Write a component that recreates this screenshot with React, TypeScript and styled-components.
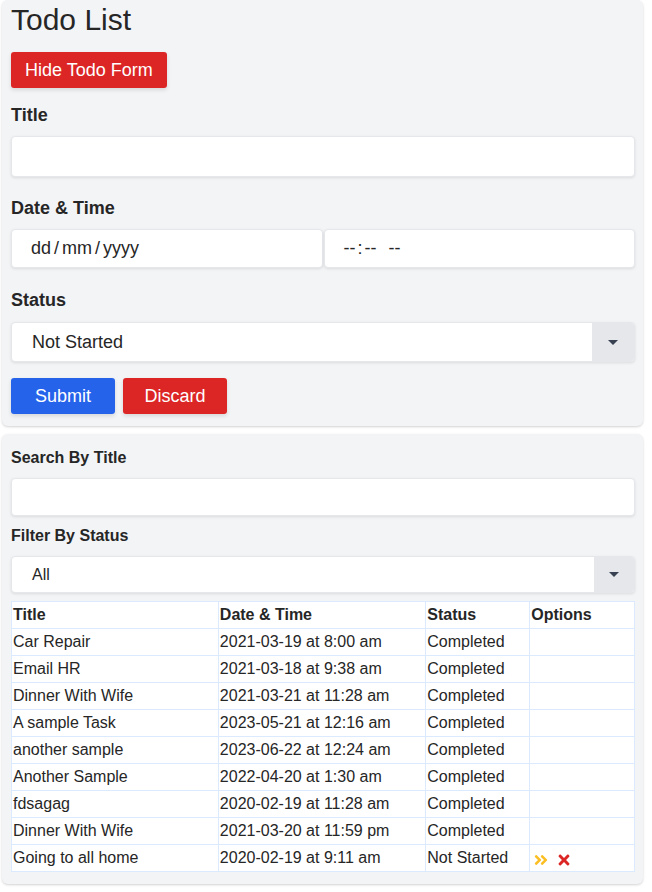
import React from "react";
import styled, { createGlobalStyle } from "styled-components";
import { FaAngleDoubleRight, FaTimes } from "react-icons/fa";

const Global = createGlobalStyle`
  html, body { margin: 0; padding: 0; background: #ffffff; }
  body { font-family: "Liberation Sans", Arial, sans-serif; color: #262626; }
  * { box-sizing: border-box; }
`;

const Page = styled.div`
  display: flex;
  flex-direction: column;
  gap: 8px;
  padding: 0 9px 8px 2px;
`;

const Card = styled.section<{ $pt: number }>`
  background: #f3f4f6;
  border-radius: 6px;
  box-shadow: 0 1px 3px rgba(0, 0, 0, 0.12), 0 1px 2px rgba(0, 0, 0, 0.06);
  padding: ${(p) => p.$pt}px 8px 12px 9px;
  display: flex;
  flex-direction: column;
`;

const Heading = styled.h1`
  margin: 0;
  font-size: 30px;
  line-height: 36px;
  font-weight: 400;
  color: #262626;
`;

const Btn = styled.button<{ $color: string; $w?: number }>`
  height: 36px;
  border: none;
  border-radius: 3px;
  background: ${(p) => p.$color};
  color: #ffffff;
  font-family: "Liberation Sans", Arial, sans-serif;
  font-size: 18px;
  padding: 0 14px;
  width: ${(p) => (p.$w ? `${p.$w}px` : "auto")};
  box-shadow: 0 2px 4px rgba(0, 0, 0, 0.12);
  cursor: pointer;
`;

const TopBtn = styled(Btn)`
  align-self: flex-start;
  margin-top: 14px;
`;

const Label = styled.label<{ $mt: number; $small?: boolean }>`
  display: block;
  margin-top: ${(p) => p.$mt}px;
  font-weight: 700;
  font-size: ${(p) => (p.$small ? 16 : 18)}px;
  line-height: ${(p) => (p.$small ? 24 : 28)}px;
  color: #262626;
`;

const Field = styled.div<{ $h: number; $mt: number }>`
  margin-top: ${(p) => p.$mt}px;
  height: ${(p) => p.$h}px;
  background: #ffffff;
  border: 1px solid #e5e7eb;
  border-radius: 4px;
  box-shadow: 0 1px 3px rgba(0, 0, 0, 0.1);
`;

const DateRow = styled.div`
  margin-top: 7px;
  display: grid;
  grid-template-columns: 1fr 1fr;
  gap: 1px;
`;

const DateBox = styled.div`
  height: 39px;
  background: #ffffff;
  border: 1px solid #e5e7eb;
  border-radius: 4px;
  box-shadow: 0 1px 3px rgba(0, 0, 0, 0.1);
  display: flex;
  align-items: center;
  padding-left: 19px;
  font-size: 18px;
  color: #262626;
  white-space: pre;
`;

const Sep = styled.span<{ $m: number }>`
  margin: 0 ${(p) => p.$m}px;
`;

const Select = styled.div<{ $h: number; $mt: number; $fs: number; $arrow: number }>`
  margin-top: ${(p) => p.$mt}px;
  height: ${(p) => p.$h}px;
  background: #ffffff;
  border: 1px solid #e5e7eb;
  border-radius: 4px;
  box-shadow: 0 1px 3px rgba(0, 0, 0, 0.1);
  display: grid;
  grid-template-columns: 1fr ${(p) => p.$arrow}px;
  overflow: hidden;
  font-size: ${(p) => p.$fs}px;
  color: #262626;
`;

const SelectValue = styled.div`
  display: flex;
  align-items: center;
  padding-left: 20px;
`;

const SelectArrow = styled.div`
  background: #e5e7eb;
  display: flex;
  align-items: center;
  justify-content: center;
`;

const Caret = styled.span`
  width: 0;
  height: 0;
  border-left: 5px solid transparent;
  border-right: 5px solid transparent;
  border-top: 5px solid #374151;
`;

const Actions = styled.div`
  margin-top: 16px;
  display: flex;
  gap: 8px;
`;

const Table = styled.table`
  margin-top: 8px;
  width: 100%;
  border-collapse: collapse;
  background: #ffffff;
  font-size: 16px;
  line-height: 24px;
  table-layout: fixed;
`;

const Th = styled.th`
  border: 1px solid #dbeafe;
  padding: 1px 1px;
  text-align: left;
  font-weight: 700;
  color: #262626;
  white-space: nowrap;
`;

const Td = styled.td`
  border: 1px solid #dbeafe;
  padding: 1px 1px;
  color: #262626;
  white-space: nowrap;
`;

const IconCell = styled.span`
  display: inline-flex;
  align-items: center;
  gap: 7px;
  padding-left: 2px;
  vertical-align: middle;
  position: relative;
  top: 1px;
`;

const rows = [
  ["Car Repair", "2021-03-19 at 8:00 am", "Completed"],
  ["Email HR", "2021-03-18 at 9:38 am", "Completed"],
  ["Dinner With Wife", "2021-03-21 at 11:28 am", "Completed"],
  ["A sample Task", "2023-05-21 at 12:16 am", "Completed"],
  ["another sample", "2023-06-22 at 12:24 am", "Completed"],
  ["Another Sample", "2022-04-20 at 1:30 am", "Completed"],
  ["fdsagag", "2020-02-19 at 11:28 am", "Completed"],
  ["Dinner With Wife", "2021-03-20 at 11:59 pm", "Completed"],
  ["Going to all home", "2020-02-19 at 9:11 am", "Not Started"],
];

export default function App() {
  return (
    <>
      <Global />
      <Page>
        <Card $pt={2}>
          <Heading>Todo List</Heading>
          <TopBtn $color="#dc2626">Hide Todo Form</TopBtn>
          <Label $mt={13}>Title</Label>
          <Field $h={41} $mt={7} />
          <Label $mt={17}>Date &amp; Time</Label>
          <DateRow>
            <DateBox>
              dd<Sep $m={3}>/</Sep>mm<Sep $m={3}>/</Sep>yyyy
            </DateBox>
            <DateBox>
              --<Sep $m={2}>:</Sep>--<Sep $m={6}>{""}</Sep>--
            </DateBox>
          </DateRow>
          <Label $mt={18}>Status</Label>
          <Select $h={40} $mt={8} $fs={18} $arrow={42}>
            <SelectValue>Not Started</SelectValue>
            <SelectArrow>
              <Caret />
            </SelectArrow>
          </Select>
          <Actions>
            <Btn $color="#2563eb" $w={104}>Submit</Btn>
            <Btn $color="#dc2626" $w={104}>Discard</Btn>
          </Actions>
        </Card>
        <Card $pt={12}>
          <Label $mt={0} $small>Search By Title</Label>
          <Field $h={38} $mt={8} />
          <Label $mt={8} $small>Filter By Status</Label>
          <Select $h={37} $mt={8} $fs={16} $arrow={40}>
            <SelectValue>All</SelectValue>
            <SelectArrow>
              <Caret />
            </SelectArrow>
          </Select>
          <Table>
            <colgroup>
              <col style={{ width: "33.2%" }} />
              <col style={{ width: "33.3%" }} />
              <col style={{ width: "16.7%" }} />
              <col style={{ width: "16.8%" }} />
            </colgroup>
            <thead>
              <tr>
                <Th>Title</Th>
                <Th>Date &amp; Time</Th>
                <Th>Status</Th>
                <Th>Options</Th>
              </tr>
            </thead>
            <tbody>
              {rows.map((r, i) => (
                <tr key={i}>
                  <Td>{r[0]}</Td>
                  <Td>{r[1]}</Td>
                  <Td>{r[2]}</Td>
                  <Td>
                    {r[2] === "Not Started" ? (
                      <IconCell>
                        <FaAngleDoubleRight color="#fbbf24" size={16} />
                        <FaTimes color="#dc2626" size={16} />
                      </IconCell>
                    ) : null}
                  </Td>
                </tr>
              ))}
            </tbody>
          </Table>
        </Card>
      </Page>
    </>
  );
}
